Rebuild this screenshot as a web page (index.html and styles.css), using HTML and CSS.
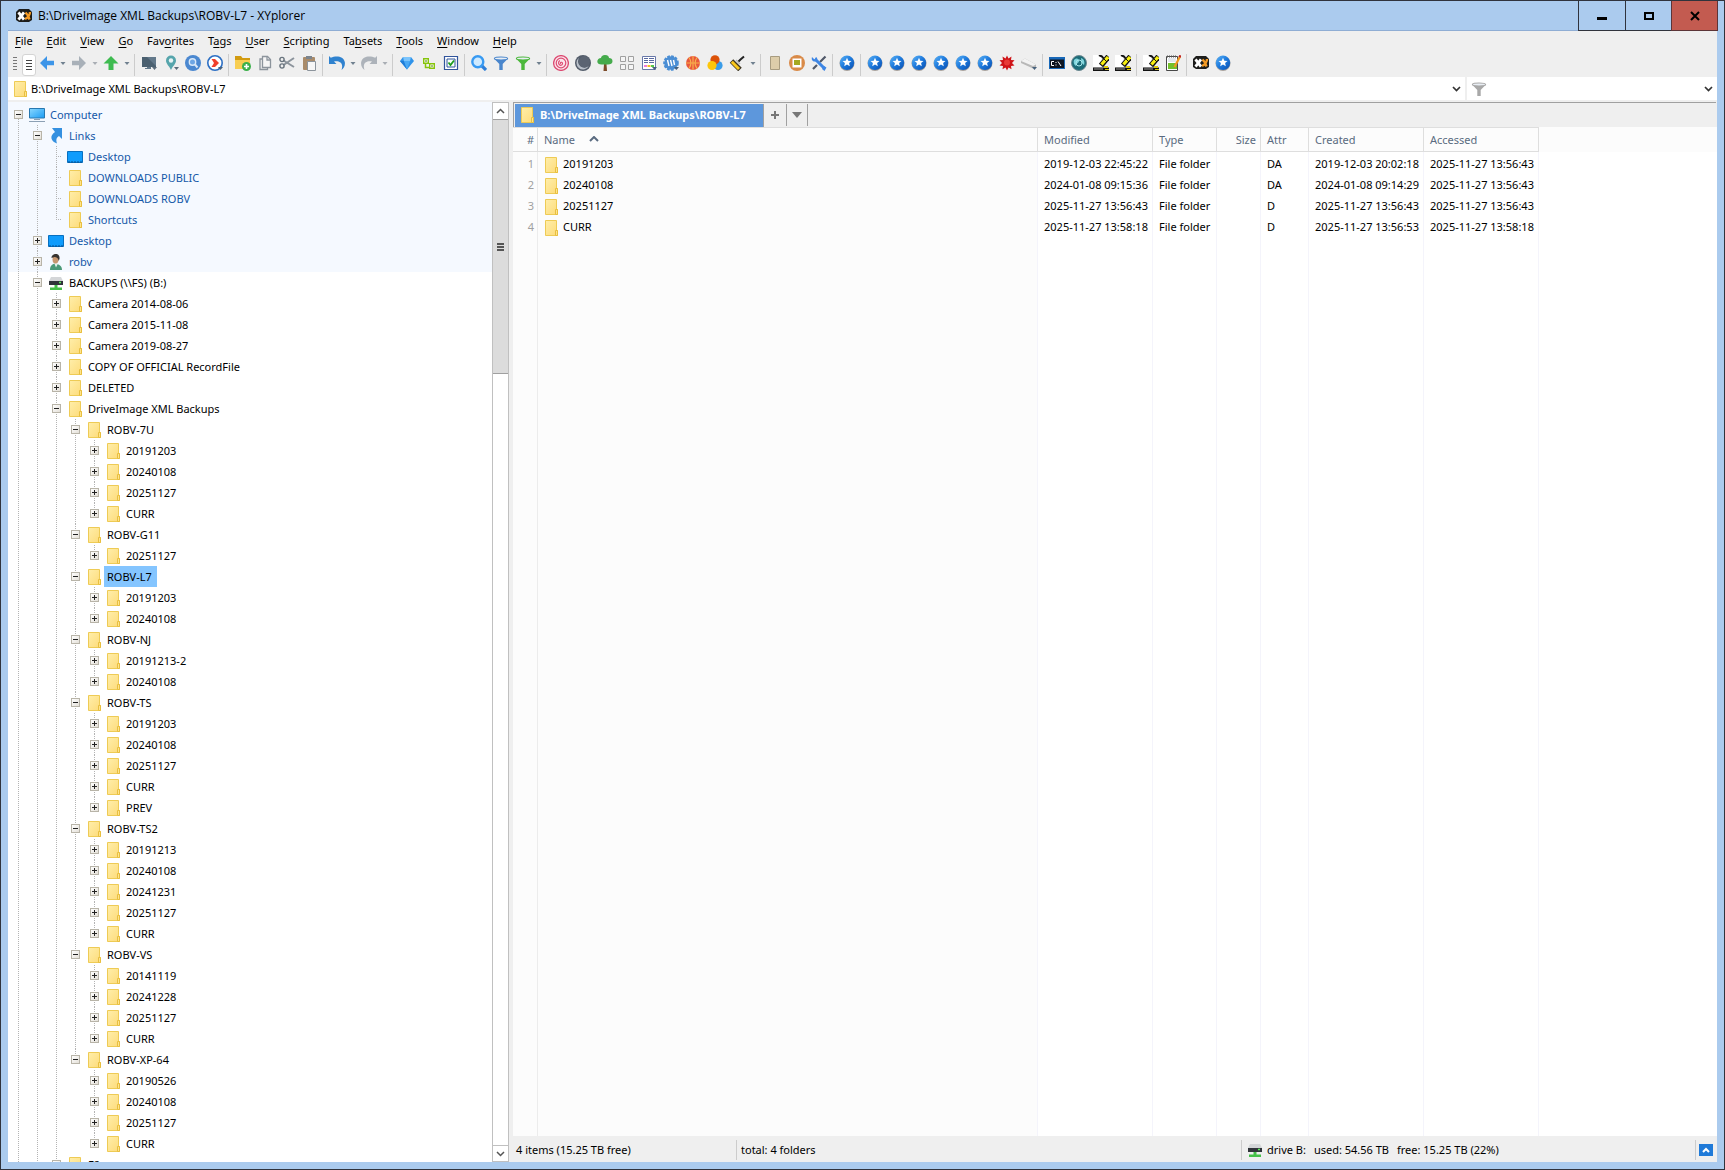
FILE: index.html
```html
<!DOCTYPE html>
<html lang="en">
<head>
<meta charset="utf-8">
<title>B:\DriveImage XML Backups\ROBV-L7 - XYplorer</title>
<link rel="stylesheet" href="styles.css">
</head>
<body>
<svg class="defs" aria-hidden="true">
  <defs>
    <linearGradient id="g-ball" x1="0" y1="0" x2="1" y2="1"><stop offset="0" stop-color="#5cb4f8"/><stop offset=".5" stop-color="#1c78dc"/><stop offset="1" stop-color="#0a4fb0"/></linearGradient>
    <linearGradient id="g-screen" x1="0" y1="0" x2="1" y2="1"><stop offset="0" stop-color="#8ad8ff"/><stop offset="1" stop-color="#1a9cf4"/></linearGradient>
    <linearGradient id="g-folder" x1="0" y1="0" x2="1" y2="1"><stop offset="0" stop-color="#ffeeaa"/><stop offset="1" stop-color="#fddb79"/></linearGradient>
  </defs>
  <symbol id="folder" viewBox="0 0 16 16"><path d="M2.500 .5h11v10h1v5h-12z" fill="url(#g-folder)" stroke="#eecb55"/><path d="M12.500 15.500v-5h2v5z" fill="#ffe48c" stroke="#e8bf40"/></symbol>
  <symbol id="xy" viewBox="0 0 16 16"><path d="M3 1h10l3 3v8l-3 2H3l-3-2V4z" fill="#1d1d1b"/><path d="M2.500 4.300l5.500 7.400M8 4.300l-5.500 7.400" stroke="#fff" stroke-width="2.800"/><path d="M9.500 4.500l2.500 3 1.500 4M14 4c0 2-1.500 5.500-5 7" stroke="#f59a23" stroke-width="2.400" fill="none"/></symbol>
  <symbol id="star" viewBox="0 0 16 16"><circle cx="8" cy="8.500" r="7.500" fill="#a8a29c"/><circle cx="8" cy="7.800" r="7.200" fill="url(#g-ball)"/><path d="M8 2.800l1.300 2.900 3.200.3-2.400 2.100.7 3.100L8 9.600l-2.800 1.600.7-3.100L3.500 6l3.200-.3z" fill="#fff"/></symbol>
  <symbol id="dd" viewBox="0 0 6 16"><path d="M.5 7h5L3 10z" fill="#70808f"/></symbol>
  <symbol id="ddlight" viewBox="0 0 6 16"><path d="M.5 7h5L3 10z" fill="#a9aeb4"/></symbol>
  <symbol id="back" viewBox="0 0 16 16"><path d="M1 8l7-7v4.700h7v4.600H8V15z" fill="#3d95e8"/></symbol>
  <symbol id="fwd" viewBox="0 0 16 16"><path d="M15 8L8 1v4.700H1v4.600h7V15z" fill="#a8b0b8"/></symbol>
  <symbol id="up" viewBox="0 0 16 16"><path d="M8 1l7.500 7.500h-5V15h-5V8.500h-5z" fill="#3ebb50"/></symbol>
  <symbol id="monitor" viewBox="0 0 16 16"><path d="M1 2h14v10H1z" fill="#4b6070"/><path d="M6 12h4v2H4v-1h2zM15 2v9L6 2z" fill="#62788a"/><path d="M11 12h5l-2.500 3z" fill="#5b6b7a"/></symbol>
  <symbol id="pin" viewBox="0 0 16 16"><path d="M8 .5a5 5 0 0 1 5 5C13 9 10 10.500 8 15 6 10.500 3 9 3 5.500a5 5 0 0 1 5-5z" fill="#56a5ac"/><circle cx="8" cy="5.500" r="2.200" fill="#e9f4f5"/><path d="M11 12h5l-2.500 3z" fill="#5b6b7a"/></symbol>
  <symbol id="find" viewBox="0 0 16 16"><circle cx="8" cy="8" r="8" fill="#4b88d0"/><circle cx="7.500" cy="7" r="3.200" fill="#6ea6e4" stroke="#d9e8f8" stroke-width="1.400"/><path d="M10 9.500l2.500 3" stroke="#d9e8f8" stroke-width="2"/></symbol>
  <symbol id="goto" viewBox="0 0 16 16"><circle cx="8" cy="8" r="7.200" fill="#fff" stroke="#2c6fc4" stroke-width="1.600"/><path d="M4.500 4h3.500L12 8l-4 4H4.500L7 8z" fill="#f0402c"/><path d="M11 12h5l-2.500 3z" fill="#48627c"/></symbol>
  <symbol id="newfolder" viewBox="0 0 16 16"><path d="M0 1h6l1.500 2H15v3H0z" fill="#d29b10"/><path d="M0 5h15v9H0z" fill="#f8ce52"/><circle cx="11.500" cy="11.500" r="4.500" fill="#3bb04a"/><path d="M11.500 9v5M9 11.500h5" stroke="#fff" stroke-width="1.600"/></symbol>
  <symbol id="copy" viewBox="0 0 16 16"><path d="M5.500 1.500h5l3 3v8h-8z" fill="#f5f5f5" stroke="#8c949c" stroke-width="1.300"/><path d="M5 4H3v10.500h7.500V13M10 2v3h3" fill="none" stroke="#8c949c" stroke-width="1.300"/></symbol>
  <symbol id="cut" viewBox="0 0 16 16"><path d="M15 3L4.500 10M15 12L4.500 5.500" stroke="#8c949c" stroke-width="2"/><circle cx="3" cy="4.500" r="2.100" fill="none" stroke="#68737d" stroke-width="1.400"/><circle cx="3" cy="11" r="2.100" fill="none" stroke="#68737d" stroke-width="1.400"/></symbol>
  <symbol id="paste" viewBox="0 0 16 16"><rect x="2" y="2" width="12" height="13" rx="1" fill="#a98b6a"/><path d="M5 1h6v3H5z" fill="#7c858e"/><path d="M6.500 6.500h8v9h-8z" fill="#f6f6f6" stroke="#8c949c"/></symbol>
  <symbol id="undo" viewBox="0 0 16 16"><path d="M0 1l1.800 1.800C7 .2 14.500 1 15.800 7c.6 3.500-1 6-3.300 8 1-3 1-6-1-7.500C9.500 6 7 6 5 6.500L7.500 9H0z" fill="#2f82cf"/></symbol>
  <symbol id="redo" viewBox="0 0 16 16"><path d="M16 1l-1.800 1.800C9 .2 1.500 1 .2 7c-.6 3.500 1 6 3.300 8-1-3-1-6 1-7.500C6.500 6 9 6 11 6.500L8.500 9H16z" fill="#adb3ba"/></symbol>
  <symbol id="diamond" viewBox="0 0 16 16"><path d="M4 2h8l3 4-7 8.500L1 6z" fill="#2f93ea"/><path d="M4 2h8l-1 4H5z" fill="#7cc4fb"/><path d="M1 6h4l3 8.500z" fill="#1f7dd8"/><path d="M5 6h6l-3 8.500z" fill="#4aa9f4"/></symbol>
  <symbol id="branch" viewBox="0 0 16 16"><path d="M2.700 3.700h4.600v4.600H2.700zM8.700 8.700h4.600v4.600H8.700z" fill="#fff" stroke="#86c40c" stroke-width="1.400"/><path d="M4.500 8.500v4H8" fill="none" stroke="#86c40c" stroke-width="1.500"/><path d="M4 6h2M10 11h2" stroke="#4a7a10"/></symbol>
  <symbol id="check" viewBox="0 0 16 16"><path d="M1.500 1.500h13v13h-13z" fill="#fff" stroke="#30549c" stroke-width="1.200"/><path d="M4 4h8v8H4z" fill="#f8fff8" stroke="#30549c"/><path d="M5.500 7.500l2 2.500 3.500-4.500" fill="none" stroke="#1d9c1d" stroke-width="1.800"/></symbol>
  <symbol id="lens" viewBox="0 0 16 16"><path d="M11 11l4 4" stroke="#2f7fd8" stroke-width="3.200"/><circle cx="6.800" cy="6.800" r="5.500" fill="#cfeaff" stroke="#389af2" stroke-width="2.400"/></symbol>
  <symbol id="funnel" viewBox="0 0 16 16"><path d="M1 3.500L6.300 9v6h3.400V9L15 3.500z" fill="currentColor"/><ellipse cx="8" cy="3.500" rx="6.600" ry="1.500" fill="#e9eef4" stroke="currentColor" stroke-width="1.200"/></symbol>
  <symbol id="spiral" viewBox="0 0 16 16"><circle cx="8" cy="8" r="7.400" fill="#fbe3ea" stroke="#dc4b72" stroke-width="1.300"/><circle cx="8" cy="8" r="4.800" fill="none" stroke="#dc4b72" stroke-width="1.200"/><path d="M8 8.500c-1-.2-.5-1.500.5-1.200 1.700.5 1.200 3-.7 3-2.500 0-3-3.500-1-4.800" fill="none" stroke="#dc4b72" stroke-width="1.200"/></symbol>
  <symbol id="moon" viewBox="0 0 16 16"><circle cx="8" cy="8" r="8" fill="#535c6a"/><path d="M4.500 2.500A6.500 6.500 0 1 0 14 10.500 6 6 0 0 1 4.500 2.500z" fill="#b9c0c9"/><circle cx="9.300" cy="6.700" r="5.600" fill="#5b6472"/></symbol>
  <symbol id="tree" viewBox="0 0 16 16"><path d="M7 9h2.500l.5 7H6.500z" fill="#7c4a28"/><path d="M8 0c3 0 4 1.500 4 3 2 0 3.500 1.200 3.500 3.200 0 2.300-2 3.300-4.500 3.300H4.500C2 9.500.3 8.500.3 6.500S2 3.200 4 3c0-1.500 1.500-3 4-3z" fill="#45ab4c"/></symbol>
  <symbol id="tiles" viewBox="0 0 16 16"><path d="M1.500 1.500h5v5h-5zM9.500 1.500h5v5h-5zM1.500 9.500h5v5h-5zM9.500 9.500h5v5h-5z" fill="#f5f5f5" stroke="#a0a0a0"/></symbol>
  <symbol id="sheet" viewBox="0 0 16 16"><path d="M1.500 1.500h13v13h-13z" fill="#fff" stroke="#6878a8"/><path d="M3 3.500h4M8 3.500h5M3 5.500h4M8 5.500h5M3 7.500h4M8 7.500h5" stroke="#5868a0"/><path d="M3 10h3v2H3z" fill="#f57cd4"/><path d="M6.500 10h3v2h-3z" fill="#f5c020"/><path d="M10 10h3v2h-3z" fill="#58c850"/><path d="M11 12h5l-2.500 3z" fill="#48627c"/></symbol>
  <symbol id="seal" viewBox="0 0 16 16"><circle cx="8" cy="8" r="6.800" fill="#4a8ed4" stroke="#4a8ed4" stroke-width="2" stroke-dasharray="2.700 1.300"/><path d="M4.500 5l1.500 6M7.500 5L9 11M10.500 5l1 5" stroke="#fff" stroke-width="1.400"/><path d="M11 12h5l-2.500 3z" fill="#48627c"/></symbol>
  <symbol id="ball" viewBox="0 0 16 16"><circle cx="8" cy="8" r="7" fill="#e8583c"/><path d="M1 8h14M8 1v14M4 2.500c2.500 3.500 2.500 7.500 0 11M12 2.500c-2.500 3.500-2.500 7.500 0 11" fill="none" stroke="#f8b04c" stroke-width="1.200"/></symbol>
  <symbol id="rgb" viewBox="0 0 16 16"><circle cx="11" cy="10.500" r="4.600" fill="#3a9ce8"/><circle cx="8" cy="4.800" r="4.600" fill="#dc5208"/><circle cx="5" cy="10.500" r="4.600" fill="#fdc60a"/></symbol>
  <symbol id="brush" viewBox="0 0 16 16"><path d="M9 7l2.500-2.500L15 1.500" stroke="#222" stroke-width="2" fill="none"/><path d="M2.500 6L11 14.500" stroke="#3c3420" stroke-width="5"/><path d="M2.800 6.800l7.200 7.200" stroke="#fbc81c" stroke-width="3"/><path d="M7 5l4 4" stroke="#b8b8b8" stroke-width="1.600"/></symbol>
  <symbol id="panel" viewBox="0 0 16 16"><path d="M3.500 1.500h9v13h-9z" fill="#ddcdaa" stroke="#a89c80"/></symbol>
  <symbol id="frame" viewBox="0 0 16 16"><circle cx="8" cy="8" r="8" fill="#d98a48"/><path d="M3.500 3.500h9v9h-9z" fill="#fff"/><path d="M5 5h6v5H5z" fill="#a4a820"/></symbol>
  <symbol id="tools" viewBox="0 0 16 16"><path d="M14.500 1.500L9 7M2 14l4-4" stroke="#505868" stroke-width="2.200"/><path d="M4 4l9 9" stroke="#3e86e4" stroke-width="3"/><path d="M1 2l2.500 2.500L5 2C7 3 6.500 6 4.500 6.500 2 7 0 5 1 2zM15.500 12.500L13 11l-2 3 2.500 2z" fill="#3e86e4"/></symbol>
  <symbol id="burst" viewBox="0 0 16 16"><path d="M8 .5l1.500 3 3-2-.5 3.500 3.500.2L13 8l2.500 2.500-3.500.4.500 3.400-3-1.800L8 15.500l-1.500-3-3 1.800.5-3.400L.5 10.500 3 8 .5 5.200 4 5l-.5-3.500 3 2z" fill="#cf1418"/><circle cx="8" cy="7.500" r="3" fill="#e83a36"/></symbol>
  <symbol id="drive" viewBox="0 0 16 16"><path d="M0 6l4-2.500 11 6v2.500l-3 1.500L0 8z" fill="#b8b8b8"/><path d="M0 6l4-2.500 11 6-3 1.500z" fill="#f2f2f2"/><path d="M11 12h5l-2.500 3z" fill="#48627c"/></symbol>
  <symbol id="cmd" viewBox="0 0 16 16"><path d="M0 2h16v12H0z" fill="#1868b8"/><path d="M1 4.500h14V13H1z" fill="#0c1420"/><path d="M5 6.500H2.500v4H5M7 7v1M7 9.500v1M9 6.500l3 4.500" stroke="#fff" fill="none"/></symbol>
  <symbol id="globe" viewBox="0 0 16 16"><circle cx="8" cy="8" r="7.500" fill="#1c6c78" stroke="#6c8890"/><path d="M3 5c3-3 5-1 5 1s-3 2-3 5C3 10 2 7 3 5zM10 3c3 1 4 4 3 7-2-1-3-4-3-7z" fill="#7fd4dc"/><circle cx="8" cy="8" r="3" fill="none" stroke="#a8e8ec"/></symbol>
  <symbol id="pen" viewBox="0 0 16 16"><path d="M0 0h8v12H0z" fill="#fff"/><path d="M6 0l3 1.500 2 2.500" stroke="#111" stroke-width="2" fill="none"/><path d="M15.500 1.500L8 10.500" stroke="#111" stroke-width="5.500"/><path d="M15 2L8.500 9.500" stroke="#f8f010" stroke-width="3.200"/><path d="M11 4l3 3" stroke="#111"/><path d="M0 12.500h16V16H0z" fill="#111"/><path d="M1 14h9" stroke="#999"/><path d="M11 11h4v2h-4zM12 14h4v1h-4z" fill="#e0cc08"/></symbol>
  <symbol id="notepad" viewBox="0 0 16 16"><path d="M1.500 1.500h11v14h-11z" fill="#fff" stroke="#484848"/><path d="M2 1.500h10" stroke="#555" stroke-width="2" stroke-dasharray="1 1"/><path d="M3 4h8M3 6h8" stroke="#c8d0d8"/><path d="M3 8h9v6H3z" fill="#74c02c"/><path d="M15 1.500L9.500 12" stroke="#f09820" stroke-width="2.200"/><path d="M15.500 .3l-1 2" stroke="#c02020" stroke-width="2.200"/></symbol>
  <symbol id="pc" viewBox="0 0 16 16"><path d="M.5 1.500h15v9.500H.5z" fill="url(#g-screen)" stroke="#2878b0"/><path d="M5 12.500h6M0 14.500h16" stroke="#8ca0b4"/></symbol>
  <symbol id="link" viewBox="0 0 16 16"><path d="M4 0h10v11l-3-3c-3 2-3 4-2 7.500C3 13.500 1 8 7 4z" fill="#3490e0"/></symbol>
  <symbol id="desk" viewBox="0 0 16 16"><path d="M.5 2.500h15v11H.5z" fill="#109cfc" stroke="#0870c0"/><path d="M1 13h14" stroke="#054e90" stroke-dasharray="2 1"/></symbol>
  <symbol id="user" viewBox="0 0 16 16"><path d="M2 16c0-4 2-6 5-6.500 4 .5 7 2.500 7 6.500z" fill="#4c9a78"/><path d="M6 8.500l2 5 2-4z" fill="#e8f0ec"/><ellipse cx="7.500" cy="5.500" rx="3" ry="4" fill="#c89870"/><path d="M3.500 4C3.500 1 6 0 8 0s4 1.500 3.500 5l-1 2c0-3-2-4-4-4z" fill="#383430"/></symbol>
  <symbol id="netdrive" viewBox="0 0 16 16"><path d="M3 2h10l2 4H1z" fill="#d4d6d8"/><path d="M1 6h14v4H1z" fill="#30343a"/><path d="M11 7.500h2" stroke="#58e858" stroke-width="1.300"/><path d="M6.500 10h3v2.500H14V15H2v-2.500h4.500z" fill="#44c048"/></symbol>
</svg>

<div class="window">
  <header class="titlebar">
    <svg class="ic"><use href="#xy"/></svg>
    <h1>B:\DriveImage XML Backups\ROBV-L7 - XYplorer</h1>
    <div class="winbtns">
      <button class="min" aria-label="Minimize"><svg width="12" height="10"><path d="M1 6h10v3H1z"/></svg></button>
      <button class="max" aria-label="Maximize"><svg width="12" height="10"><path d="M2 2h8v6H2z" fill="none" stroke="#000" stroke-width="2"/></svg></button>
      <button class="close" aria-label="Close"><svg width="12" height="10"><path d="M2 1l8 8M10 1L2 9" stroke="#000" stroke-width="2"/></svg></button>
    </div>
  </header>

  <div class="client">
    <nav class="menu" aria-label="Main menu">
      <button><u>F</u>ile</button><button><u>E</u>dit</button><button><u>V</u>iew</button><button><u>G</u>o</button><button>Fav<u>o</u>rites</button><button>T<u>a</u>gs</button><button><u>U</u>ser</button><button><u>S</u>cripting</button><button>Ta<u>b</u>sets</button><button><u>T</u>ools</button><button><u>W</u>indow</button><button><u>H</u>elp</button>
    </nav>

    <div class="toolbar" role="toolbar" aria-label="Toolbar">
      <span class="grip"></span>
      <button class="list" aria-label="Menu"><span></span></button>
      <button class="tb" aria-label="Back"><svg><use href="#back"/></svg></button><button class="dd" aria-label="Back history"><svg><use href="#dd"/></svg></button>
      <button class="tb" aria-label="Forward"><svg><use href="#fwd"/></svg></button><button class="dd" aria-label="Forward history"><svg><use href="#ddlight"/></svg></button>
      <button class="tb" aria-label="Up"><svg><use href="#up"/></svg></button><button class="dd" aria-label="Parents"><svg><use href="#dd"/></svg></button>
      <i class="sep"></i>
      <button class="tb" aria-label="Drives"><svg><use href="#monitor"/></svg></button>
      <button class="tb" aria-label="Hotlist"><svg><use href="#pin"/></svg></button>
      <button class="tb" aria-label="Find"><svg><use href="#find"/></svg></button>
      <button class="tb" aria-label="Go to"><svg><use href="#goto"/></svg></button>
      <i class="sep"></i>
      <button class="tb" aria-label="New folder"><svg><use href="#newfolder"/></svg></button>
      <button class="tb" aria-label="Copy"><svg><use href="#copy"/></svg></button>
      <button class="tb" aria-label="Cut"><svg><use href="#cut"/></svg></button>
      <button class="tb" aria-label="Paste"><svg><use href="#paste"/></svg></button>
      <i class="sep"></i>
      <button class="tb" aria-label="Undo"><svg><use href="#undo"/></svg></button><button class="dd" aria-label="Undo list"><svg><use href="#dd"/></svg></button>
      <button class="tb" aria-label="Redo"><svg><use href="#redo"/></svg></button><button class="dd" aria-label="Redo list"><svg><use href="#ddlight"/></svg></button>
      <i class="sep"></i>
      <button class="tb" aria-label="Tags"><svg><use href="#diamond"/></svg></button>
      <button class="tb" aria-label="Mini tree"><svg><use href="#branch"/></svg></button>
      <button class="tb" aria-label="Checkboxes"><svg><use href="#check"/></svg></button>
      <i class="sep"></i>
      <button class="tb" aria-label="Search"><svg><use href="#lens"/></svg></button>
      <button class="tb blue-ic" aria-label="Visual filter"><svg><use href="#funnel"/></svg></button>
      <button class="tb green-ic" aria-label="Power filter"><svg><use href="#funnel"/></svg></button><button class="dd" aria-label="Filters"><svg><use href="#dd"/></svg></button>
      <i class="sep"></i>
      <button class="tb" aria-label="Spot"><svg><use href="#spiral"/></svg></button>
      <button class="tb" aria-label="Dark mode"><svg><use href="#moon"/></svg></button>
      <button class="tb" aria-label="Tree"><svg><use href="#tree"/></svg></button>
      <button class="tb" aria-label="Tiles"><svg><use href="#tiles"/></svg></button>
      <button class="tb" aria-label="Views"><svg><use href="#sheet"/></svg></button>
      <button class="tb" aria-label="Labels"><svg><use href="#seal"/></svg></button>
      <button class="tb" aria-label="Ball"><svg><use href="#ball"/></svg></button>
      <button class="tb" aria-label="Color filters"><svg><use href="#rgb"/></svg></button>
      <button class="tb" aria-label="Highlight"><svg><use href="#brush"/></svg></button><button class="dd" aria-label="Highlight colors"><svg><use href="#dd"/></svg></button>
      <i class="sep"></i>
      <button class="tb" aria-label="Preview panel"><svg><use href="#panel"/></svg></button>
      <button class="tb" aria-label="Preview"><svg><use href="#frame"/></svg></button>
      <button class="tb" aria-label="Configuration"><svg><use href="#tools"/></svg></button>
      <i class="sep"></i>
      <button class="tb" aria-label="User button 1"><svg><use href="#star"/></svg></button>
      <i class="sep"></i>
      <button class="tb" aria-label="User button 2"><svg><use href="#star"/></svg></button>
      <button class="tb" aria-label="User button 3"><svg><use href="#star"/></svg></button>
      <button class="tb" aria-label="User button 4"><svg><use href="#star"/></svg></button>
      <button class="tb" aria-label="User button 5"><svg><use href="#star"/></svg></button>
      <button class="tb" aria-label="User button 6"><svg><use href="#star"/></svg></button>
      <button class="tb" aria-label="User button 7"><svg><use href="#star"/></svg></button>
      <button class="tb" aria-label="Burst"><svg><use href="#burst"/></svg></button>
      <button class="tb" aria-label="Removable drives"><svg><use href="#drive"/></svg></button>
      <i class="sep"></i>
      <button class="tb" aria-label="Command prompt"><svg><use href="#cmd"/></svg></button>
      <button class="tb" aria-label="Web"><svg><use href="#globe"/></svg></button>
      <button class="tb" aria-label="Editor 1"><svg><use href="#pen"/></svg></button>
      <button class="tb" aria-label="Editor 2"><svg><use href="#pen"/></svg></button>
      <i class="sep"></i>
      <button class="tb" aria-label="Editor 3"><svg><use href="#pen"/></svg></button>
      <button class="tb" aria-label="Notepad"><svg><use href="#notepad"/></svg></button>
      <i class="sep"></i>
      <button class="tb" aria-label="XYplorer"><svg><use href="#xy"/></svg></button>
      <button class="tb" aria-label="User button 8"><svg><use href="#star"/></svg></button>
    </div>

    <div class="address">
      <div class="combo path">
        <svg class="ic"><use href="#folder"/></svg>
        <input aria-label="Address" value="B:\DriveImage XML Backups\ROBV-L7">
        <button class="chev" aria-label="Address history"><svg width="9" height="8"><path d="M1 2l3.500 3.500L8 2" fill="none" stroke="#333" stroke-width="1.700"/></svg></button>
      </div>
      <div class="combo filter">
        <svg class="ic"><use href="#funnel"/></svg>
        <input aria-label="Filter">
        <button class="chev" aria-label="Filter history"><svg width="9" height="8"><path d="M1 2l3.500 3.500L8 2" fill="none" stroke="#333" stroke-width="1.700"/></svg></button>
      </div>
    </div>

    <main class="panes">
      <aside class="treepane">
        <div class="tree">
          <ul>
            <li class="more blue"><button class="t m" aria-label="Collapse"></button><svg class="ic"><use href="#pc"/></svg><a href="#">Computer</a>
              <ul>
                <li><button class="t m" aria-label="Collapse"></button><svg class="ic"><use href="#link"/></svg><a href="#">Links</a>
                  <ul>
                    <li><i class="t n"></i><svg class="ic"><use href="#desk"/></svg><a href="#">Desktop</a></li>
                    <li><i class="t n"></i><svg class="ic"><use href="#folder"/></svg><a href="#">DOWNLOADS PUBLIC</a></li>
                    <li><i class="t n"></i><svg class="ic"><use href="#folder"/></svg><a href="#">DOWNLOADS ROBV</a></li>
                    <li><i class="t n"></i><svg class="ic"><use href="#folder"/></svg><a href="#">Shortcuts</a></li>
                  </ul></li>
                <li><button class="t" aria-label="Expand"></button><svg class="ic"><use href="#desk"/></svg><a href="#">Desktop</a></li>
                <li><button class="t" aria-label="Expand"></button><svg class="ic"><use href="#user"/></svg><a href="#">robv</a></li>
                <li class="more black"><button class="t m" aria-label="Collapse"></button><svg class="ic"><use href="#netdrive"/></svg><a href="#">BACKUPS (\\FS) (B:)</a>
                  <ul>
                    <li><button class="t" aria-label="Expand"></button><svg class="ic"><use href="#folder"/></svg><a href="#">Camera 2014-08-06</a></li>
                    <li><button class="t" aria-label="Expand"></button><svg class="ic"><use href="#folder"/></svg><a href="#">Camera 2015-11-08</a></li>
                    <li><button class="t" aria-label="Expand"></button><svg class="ic"><use href="#folder"/></svg><a href="#">Camera 2019-08-27</a></li>
                    <li><button class="t" aria-label="Expand"></button><svg class="ic"><use href="#folder"/></svg><a href="#">COPY OF OFFICIAL RecordFile</a></li>
                    <li><button class="t" aria-label="Expand"></button><svg class="ic"><use href="#folder"/></svg><a href="#">DELETED</a></li>
                    <li><button class="t m" aria-label="Collapse"></button><svg class="ic"><use href="#folder"/></svg><a href="#">DriveImage XML Backups</a>
                      <ul>
                        <li><button class="t m" aria-label="Collapse"></button><svg class="ic"><use href="#folder"/></svg><a href="#">ROBV-7U</a>
                          <ul>
                            <li><button class="t" aria-label="Expand"></button><svg class="ic"><use href="#folder"/></svg><a href="#">20191203</a></li>
                            <li><button class="t" aria-label="Expand"></button><svg class="ic"><use href="#folder"/></svg><a href="#">20240108</a></li>
                            <li><button class="t" aria-label="Expand"></button><svg class="ic"><use href="#folder"/></svg><a href="#">20251127</a></li>
                            <li><button class="t" aria-label="Expand"></button><svg class="ic"><use href="#folder"/></svg><a href="#">CURR</a></li>
                          </ul></li>
                        <li><button class="t m" aria-label="Collapse"></button><svg class="ic"><use href="#folder"/></svg><a href="#">ROBV-G11</a>
                          <ul>
                            <li><button class="t" aria-label="Expand"></button><svg class="ic"><use href="#folder"/></svg><a href="#">20251127</a></li>
                          </ul></li>
                        <li><button class="t m" aria-label="Collapse"></button><svg class="ic"><use href="#folder"/></svg><a href="#" class="sel" aria-current="true">ROBV-L7</a>
                          <ul>
                            <li><button class="t" aria-label="Expand"></button><svg class="ic"><use href="#folder"/></svg><a href="#">20191203</a></li>
                            <li><button class="t" aria-label="Expand"></button><svg class="ic"><use href="#folder"/></svg><a href="#">20240108</a></li>
                          </ul></li>
                        <li><button class="t m" aria-label="Collapse"></button><svg class="ic"><use href="#folder"/></svg><a href="#">ROBV-NJ</a>
                          <ul>
                            <li><button class="t" aria-label="Expand"></button><svg class="ic"><use href="#folder"/></svg><a href="#">20191213-2</a></li>
                            <li><button class="t" aria-label="Expand"></button><svg class="ic"><use href="#folder"/></svg><a href="#">20240108</a></li>
                          </ul></li>
                        <li><button class="t m" aria-label="Collapse"></button><svg class="ic"><use href="#folder"/></svg><a href="#">ROBV-TS</a>
                          <ul>
                            <li><button class="t" aria-label="Expand"></button><svg class="ic"><use href="#folder"/></svg><a href="#">20191203</a></li>
                            <li><button class="t" aria-label="Expand"></button><svg class="ic"><use href="#folder"/></svg><a href="#">20240108</a></li>
                            <li><button class="t" aria-label="Expand"></button><svg class="ic"><use href="#folder"/></svg><a href="#">20251127</a></li>
                            <li><button class="t" aria-label="Expand"></button><svg class="ic"><use href="#folder"/></svg><a href="#">CURR</a></li>
                            <li><button class="t" aria-label="Expand"></button><svg class="ic"><use href="#folder"/></svg><a href="#">PREV</a></li>
                          </ul></li>
                        <li><button class="t m" aria-label="Collapse"></button><svg class="ic"><use href="#folder"/></svg><a href="#">ROBV-TS2</a>
                          <ul>
                            <li><button class="t" aria-label="Expand"></button><svg class="ic"><use href="#folder"/></svg><a href="#">20191213</a></li>
                            <li><button class="t" aria-label="Expand"></button><svg class="ic"><use href="#folder"/></svg><a href="#">20240108</a></li>
                            <li><button class="t" aria-label="Expand"></button><svg class="ic"><use href="#folder"/></svg><a href="#">20241231</a></li>
                            <li><button class="t" aria-label="Expand"></button><svg class="ic"><use href="#folder"/></svg><a href="#">20251127</a></li>
                            <li><button class="t" aria-label="Expand"></button><svg class="ic"><use href="#folder"/></svg><a href="#">CURR</a></li>
                          </ul></li>
                        <li><button class="t m" aria-label="Collapse"></button><svg class="ic"><use href="#folder"/></svg><a href="#">ROBV-VS</a>
                          <ul>
                            <li><button class="t" aria-label="Expand"></button><svg class="ic"><use href="#folder"/></svg><a href="#">20141119</a></li>
                            <li><button class="t" aria-label="Expand"></button><svg class="ic"><use href="#folder"/></svg><a href="#">20241228</a></li>
                            <li><button class="t" aria-label="Expand"></button><svg class="ic"><use href="#folder"/></svg><a href="#">20251127</a></li>
                            <li><button class="t" aria-label="Expand"></button><svg class="ic"><use href="#folder"/></svg><a href="#">CURR</a></li>
                          </ul></li>
                        <li><button class="t m" aria-label="Collapse"></button><svg class="ic"><use href="#folder"/></svg><a href="#">ROBV-XP-64</a>
                          <ul>
                            <li><button class="t" aria-label="Expand"></button><svg class="ic"><use href="#folder"/></svg><a href="#">20190526</a></li>
                            <li><button class="t" aria-label="Expand"></button><svg class="ic"><use href="#folder"/></svg><a href="#">20240108</a></li>
                            <li><button class="t" aria-label="Expand"></button><svg class="ic"><use href="#folder"/></svg><a href="#">20251127</a></li>
                            <li><button class="t" aria-label="Expand"></button><svg class="ic"><use href="#folder"/></svg><a href="#">CURR</a></li>
                          </ul></li>
                      </ul></li>
                    <li><button class="t" aria-label="Expand"></button><svg class="ic"><use href="#folder"/></svg><a href="#">F2</a></li>
                  </ul></li>
              </ul></li>
          </ul>
        </div>
        <div class="scroll">
          <button aria-label="Scroll up"><svg width="9" height="8"><path d="M1 6l3.500-3.500L8 6" fill="none" stroke="#555" stroke-width="1.500"/></svg></button>
          <div class="thumb"><span></span></div>
          <button class="down" aria-label="Scroll down"><svg width="9" height="8"><path d="M1 2l3.500 3.500L8 2" fill="none" stroke="#555" stroke-width="1.500"/></svg></button>
        </div>
      </aside>

      <section class="listpane">
        <div class="tabs">
          <button class="tab"><svg class="ic"><use href="#folder"/></svg>B:\DriveImage XML Backups\ROBV-L7</button>
          <button class="tabbtn" aria-label="New tab"><svg width="8" height="8"><path d="M0 4h8M4 0v8" stroke="#777" stroke-width="2"/></svg></button>
          <button class="tabbtn narrow" aria-label="Tab list"><svg width="10" height="6"><path d="M0 0h10L5 6z" fill="#777"/></svg></button>
        </div>
        <div class="list-body">
          <table>
            <colgroup><col class="c-n"><col><col class="c-date"><col class="c-type"><col class="c-size"><col class="c-attr"><col class="c-date"><col class="c-date"><col class="c-rest"></colgroup>
            <thead><tr><th class="num">#</th><th>Name<svg class="sort" width="10" height="6"><path d="M1 5l4-4 4 4" fill="none" stroke="#5a6b80" stroke-width="2"/></svg></th><th>Modified</th><th>Type</th><th class="r">Size</th><th>Attr</th><th>Created</th><th>Accessed</th><th class="rest"></th></tr></thead>
            <tbody>
              <tr><td class="num">1</td><td><svg class="ic"><use href="#folder"/></svg>20191203</td><td>2019-12-03 22:45:22</td><td>File folder</td><td></td><td>DA</td><td>2019-12-03 20:02:18</td><td>2025-11-27 13:56:43</td><td></td></tr>
              <tr><td class="num">2</td><td><svg class="ic"><use href="#folder"/></svg>20240108</td><td>2024-01-08 09:15:36</td><td>File folder</td><td></td><td>DA</td><td>2024-01-08 09:14:29</td><td>2025-11-27 13:56:43</td><td></td></tr>
              <tr><td class="num">3</td><td><svg class="ic"><use href="#folder"/></svg>20251127</td><td>2025-11-27 13:56:43</td><td>File folder</td><td></td><td>D</td><td>2025-11-27 13:56:43</td><td>2025-11-27 13:56:43</td><td></td></tr>
              <tr><td class="num">4</td><td><svg class="ic"><use href="#folder"/></svg>CURR</td><td>2025-11-27 13:58:18</td><td>File folder</td><td></td><td>D</td><td>2025-11-27 13:56:53</td><td>2025-11-27 13:58:18</td><td></td></tr>
              <tr class="fill"><td></td><td></td><td></td><td></td><td></td><td></td><td></td><td></td><td></td></tr>
            </tbody>
          </table>
        </div>
        <footer class="status">
          <span class="s1">4 items (15.25 TB free)</span>
          <span class="s2">total: 4 folders</span>
          <span class="s3"><svg class="ic"><use href="#netdrive"/></svg><span>drive B:</span><span>used: 54.56 TB</span><span>free: 15.25 TB (22%)</span></span>
          <span class="s4"><button aria-label="Toggle info panel"><svg width="14" height="12"><path d="M4 8l3-3 3 3" fill="none" stroke="#fff" stroke-width="2"/></svg></button></span>
        </footer>
      </section>
    </main>
  </div>
</div>
</body>
</html>
```
FILE: styles.css
```css
* { box-sizing: border-box; }
body {
  margin: 0;
  font: 11px/20px "Noto Sans", "Open Sans", sans-serif;
  color: #000;
}
button, input {
  font: inherit;
  color: inherit;
  border: 0;
  padding: 0;
  margin: 0;
  background: none;
}
.defs { position: absolute; width: 0; height: 0; }
.ic { width: 16px; height: 16px; flex: none; }

/* Window frame */
.window {
  height: 100vh;
  display: flex;
  flex-direction: column;
  background: #abcbee;
  border: 1px solid #30333c;
  padding: 0 7px 7px;
}
.titlebar {
  height: 30px;
  flex: none;
  display: flex;
  align-items: center;
  gap: 6px;
  padding-left: 8px;
  border-bottom: 1px solid #8fadd4;
}
.titlebar h1 { margin: 0; font-size: 12px; font-weight: 400; font-family: "Open Sans", sans-serif; flex: 1; }
.winbtns { display: flex; align-self: stretch; margin: 0 -1px -1px 0; }
.winbtns button {
  width: 47px;
  border: solid #30333c;
  border-width: 0 0 1px 1px;
  display: flex;
  align-items: center;
  justify-content: center;
}
.winbtns .max { width: 46px; }
.winbtns .close { background: #c35b50; border-color: #5c3438; border-right-width: 1px; }
.client { flex: 1; min-height: 0; display: flex; flex-direction: column; background: #efefef; }

/* Menu and toolbar */
.menu { display: flex; height: 21px; flex: none; }
.menu button { padding: 0 7px 2px; }
.menu u { text-underline-offset: 2px; }
.toolbar { display: flex; height: 25px; flex: none; padding: 2px 4px 0; align-items: flex-start; }
.grip {
  width: 4px;
  height: 13px;
  margin: 3px 5px 0 1px;
  background: repeating-linear-gradient(#777 0 1px, transparent 1px 3px);
}
.list {
  width: 14px;
  height: 22px;
  background: #fff;
  border: 1px solid #d4d4d4;
  border-radius: 3px;
  display: flex;
  align-items: center;
  justify-content: center;
}
.list span { width: 6px; height: 10px; background: repeating-linear-gradient(#444 0 1px, transparent 1px 3px); }
.tb { width: 22px; height: 18px; flex: none; display: flex; align-items: center; justify-content: center; }
.tb svg { width: 16px; height: 16px; }
.blue-ic { color: #4a86cc; }
.green-ic { color: #4cb83c; }
.dd { width: 10px; height: 18px; flex: none; display: flex; align-items: center; justify-content: center; }
.dd svg { width: 6px; height: 16px; }
.sep { width: 6px; height: 22px; flex: none; border-left: 2px solid transparent; background: linear-gradient(#ccc, #ccc) 0 0 / 1px 100% no-repeat; }

/* Address bar */
.address { display: flex; gap: 2px; height: 23px; flex: none; margin-bottom: 2px; }
.combo { display: flex; align-items: center; background: #fff; padding: 0 4px; }
.combo input { flex: 1; min-width: 0; height: 20px; outline: 0; }
.path { flex: 1; }
.path input { padding-left: 3px; }
.filter { width: 250px; color: #a8a8a8; }
.chev { width: 10px; height: 20px; display: flex; align-items: center; justify-content: center; }

/* Folder tree */
.panes { flex: 1; min-height: 0; display: flex; }
.treepane { width: 501px; flex: none; display: flex; }
.tree {
  flex: 1;
  overflow: hidden;
  padding: 2px 0 0 6px;
  background: linear-gradient(#f5f9ff 170px, #fff 170px);
}
.tree ul { list-style: none; margin: 0; padding: 0; }
.tree ul ul { padding-left: 19px; flex-basis: 100%; }
.tree li { position: relative; display: flex; flex-wrap: wrap; align-items: center; }
.tree li::before {
  content: "";
  position: absolute;
  left: 4px;
  top: 0;
  width: 1px;
  height: 100%;
  background: repeating-linear-gradient(#b4b4b4 0 1px, transparent 1px 2px);
}
.tree li:last-child::before { height: 11px; }
.tree li.more::before { height: 100%; }
.tree > ul > li::before { top: 11px; }
.tree a { color: inherit; text-decoration: none; height: 21px; line-height: 22px; padding: 0 5px 0 3px; margin-left: 2px; }
.tree .sel { background: #84c5ff; }
.blue { color: #1458a8; }
.black { color: #000; }
.t {
  position: relative;
  width: 9px;
  height: 9px;
  margin-right: 6px;
  border: 1px solid #b8b4a8;
  background:
    linear-gradient(#222, #222) center / 5px 1px no-repeat,
    linear-gradient(#222, #222) center / 1px 5px no-repeat,
    linear-gradient(135deg, #fff, #e4e0d8);
}
.t.m { background: linear-gradient(#222, #222) center / 5px 1px no-repeat, linear-gradient(135deg, #fff, #e4e0d8); }
.t.n { border: 0; background: repeating-linear-gradient(90deg, #b4b4b4 0 1px, transparent 1px 2px) 4px 4px / 5px 1px no-repeat; }

/* Scroll bar */
.scroll { width: 17px; display: flex; flex-direction: column; background: #fff; border: 1px solid #c0c0c0; }
.scroll button { height: 16px; flex: none; display: flex; align-items: center; justify-content: center; }
.thumb {
  height: 255px;
  flex: none;
  display: flex;
  align-items: center;
  justify-content: center;
  background: #dcdcdc;
  border: solid #a0a0a0;
  border-width: 1px 0;
}
.thumb span { width: 7px; height: 8px; background: repeating-linear-gradient(#555 0 2px, transparent 2px 3px); }
.scroll .down { margin-top: auto; border-top: 1px solid #c0c0c0; }

/* File list */
.listpane { flex: 1; min-width: 0; display: flex; flex-direction: column; padding-left: 4px; }
.tabs { height: 25px; flex: none; display: flex; border-top: 1px solid #a0a0a0; border-left: 1px solid #a0a0a0; padding: 1px 0 0 1px; margin-right: 1px; }
.tab {
  display: flex;
  align-items: center;
  gap: 5px;
  min-width: 249px;
  padding: 0 8px 2px 4px;
  background: #5d97dc;
  color: #fff;
  font-weight: 700;
  border-right: 1px solid #a0a0a0;
}
.tabbtn { width: 23px; height: 22px; border-right: 1px solid #a0a0a0; display: flex; align-items: center; justify-content: center; }
.tabbtn.narrow { width: 21px; }
.list-body { flex: 1; min-height: 0; background: #fff; }
table { width: 100%; height: 100%; table-layout: fixed; border-collapse: separate; border-spacing: 0; }
.c-n { width: 25px; }
.c-date { width: 115px; }
.c-type { width: 64px; }
.c-size { width: 44px; }
.c-attr { width: 48px; }
.c-rest { width: 178px; }
th {
  height: 25px;
  padding: 0 4px 0 6px;
  text-align: left;
  font-weight: 400;
  font-size: 11px;
  color: #5a6b80;
  background: #fcfcfc;
  border: solid #dedede;
  border-width: 1px 1px 1px 0;
}
th.rest { border-color: #fcfcfc; }
th.r { text-align: right; }
th.num, td.num { text-align: right; padding: 0 3px 0 0; }
.sort { margin: 0 0 3px 14px; vertical-align: middle; }
td { height: 21px; padding: 0 0 0 6px; white-space: nowrap; border-right: 1px solid #f4f4fb; }
td:last-child { border: 0; }
td:nth-child(-n+2) { background: #fcfcfc; }
td:first-child { border-color: #ececec; }
td.num { color: #a0a0a0; }
td .ic { vertical-align: middle; margin: 0 4px 0 -1px; }
tbody tr:first-child td { height: 22px; padding-top: 1px; }
.fill td { height: auto; }

/* Status bar */
.status { height: 26px; flex: none; display: flex; align-items: center; padding-top: 2px; }
.status > span { display: flex; align-items: center; height: 20px; }
.s1 { width: 223px; padding-left: 3px; }
.s2 { flex: 1; padding-left: 4px; border-left: 1px solid #ccc; }
.s3 { width: 454px; padding-left: 5px; gap: 8px; border-left: 1px solid #ccc; }
.s3 .ic { margin-right: -4px; }
.s4 { width: 22px; padding-left: 3px; border-left: 1px solid #ccc; }
.s4 button { width: 14px; height: 12px; background: #1f7ad8; display: flex; }
```
